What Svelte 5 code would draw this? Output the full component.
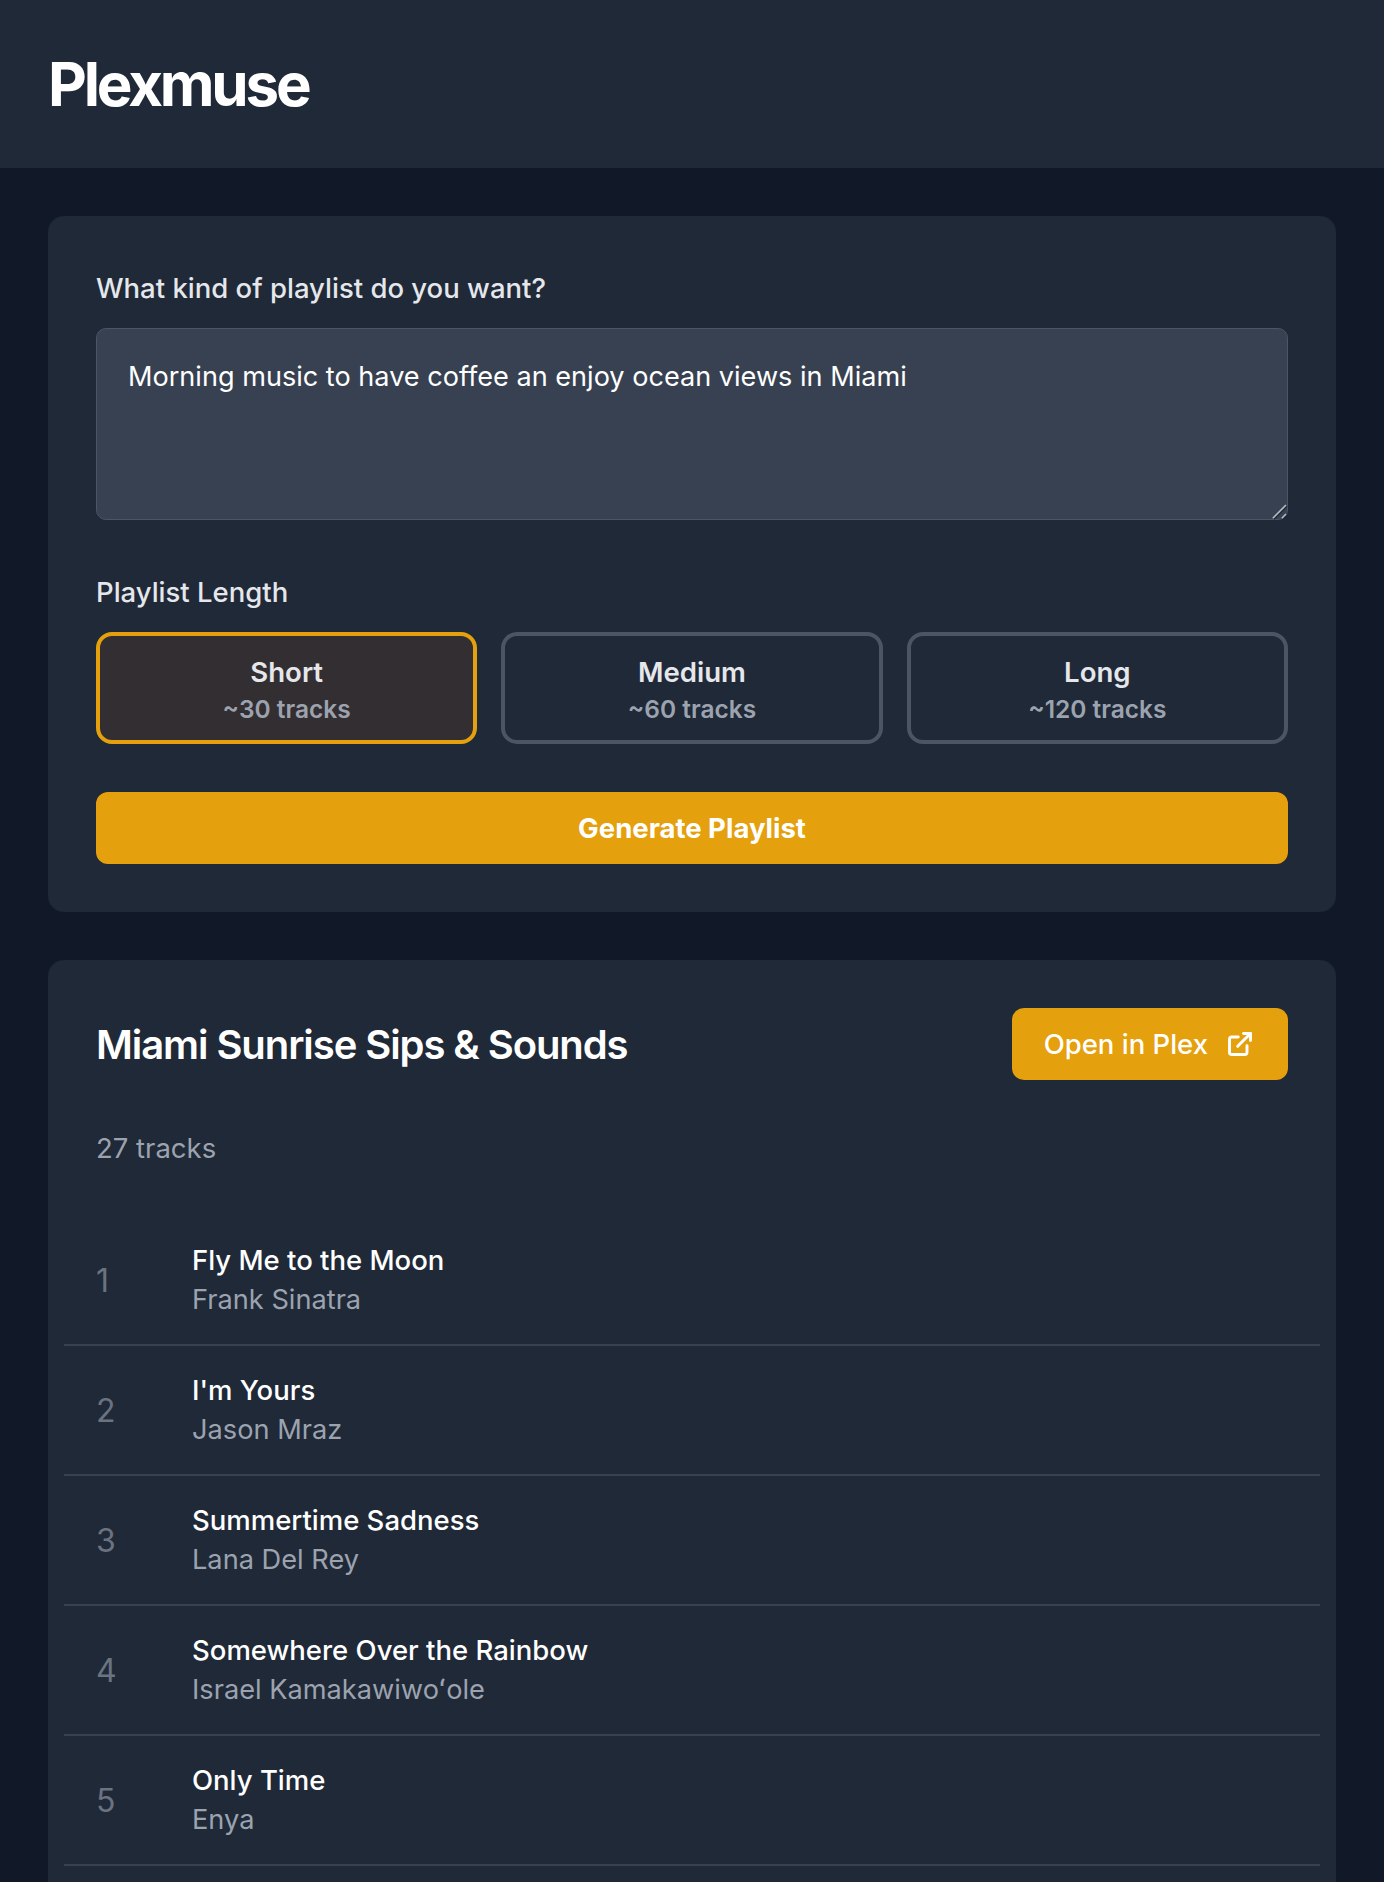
<script>
	let prompt = "Morning music to have coffee an enjoy ocean views in Miami";
	let selected = "short";

	const lengths = [
		{ id: "short", name: "Short", hint: "~30 tracks" },
		{ id: "medium", name: "Medium", hint: "~60 tracks" },
		{ id: "long", name: "Long", hint: "~120 tracks" }
	];

	const tracks = [
		{ title: "Fly Me to the Moon", artist: "Frank Sinatra" },
		{ title: "I'm Yours", artist: "Jason Mraz" },
		{ title: "Summertime Sadness", artist: "Lana Del Rey" },
		{ title: "Somewhere Over the Rainbow", artist: "Israel Kamakawiwoʻole" },
		{ title: "Only Time", artist: "Enya" }
	];
</script>

<header>
	<h1>Plexmuse</h1>
</header>

<main>
	<section class="card">
		<label for="prompt">What kind of playlist do you want?</label>
		<div class="prompt-box">
			<textarea id="prompt" bind:value={prompt}></textarea>
			<svg class="grip" viewBox="0 0 16 16" width="16" height="16" fill="none" stroke-width="1.6" aria-hidden="true">
				<path d="M1.8 15.2 15 2M10.8 15.2 15 11" stroke="#1f2937" />
				<path d="M.8 14.2 14 1M9.8 14.2 14 10" stroke="#b6bbc4" />
			</svg>
		</div>

		<div class="field-label">Playlist Length</div>
		<div class="lengths">
			{#each lengths as len}
				<button class="length" class:active={selected === len.id} on:click={() => (selected = len.id)}>
					<span class="name">{len.name}</span>
					<span class="hint">{len.hint}</span>
				</button>
			{/each}
		</div>

		<button class="generate">Generate Playlist</button>
	</section>

	<section class="card">
		<div class="result-head">
			<h2>Miami Sunrise Sips &amp; Sounds</h2>
			<button class="open">
				Open in Plex
				<svg viewBox="0 0 24 24" width="28" height="28" fill="none" stroke="currentColor" stroke-width="2.5" stroke-linecap="round" stroke-linejoin="round">
					<path d="M18 13.5V19a2 2 0 0 1-2 2H5a2 2 0 0 1-2-2V8a2 2 0 0 1 2-2h5.5" />
					<path d="M15 3h6v6" />
					<path d="M10 14 21 3" />
				</svg>
			</button>
		</div>
		<p class="count">27 tracks</p>

		<ul>
			{#each tracks as track, i}
				<li>
					<span class="num">{i + 1}</span>
					<div>
						<div class="title">{track.title}</div>
						<div class="artist">{track.artist}</div>
					</div>
				</li>
			{/each}
		</ul>
	</section>
</main>

<style>
	:global(body) {
		background: #111827;
		color: #fff;
		font-family: Inter, "Liberation Sans", sans-serif;
	}

	header {
		background: #1f2937;
		padding: 48px;
		height: 168px;
		box-sizing: border-box;
		display: flex;
		align-items: center;
	}

	h1 {
		margin: 0;
		font-size: 60px;
		font-weight: 700;
		letter-spacing: -0.053em;
		line-height: 72px;
	}

	main {
		padding: 48px;
		display: flex;
		flex-direction: column;
		gap: 48px;
	}

	.card {
		background: #1f2937;
		border-radius: 16px;
		padding: 48px;
	}

	label,
	.field-label {
		display: block;
		font-size: 27.5px;
		font-weight: 500;
		line-height: 48px;
		color: #e5e7eb;
		margin-bottom: 16px;
	}

	.prompt-box {
		position: relative;
		margin-bottom: 48px;
	}

	.grip {
		position: absolute;
		right: 0;
		bottom: 0;
		pointer-events: none;
	}

	textarea {
		display: block;
		width: 100%;
		height: 192px;
		box-sizing: border-box;
		background: #374151;
		border: 1.5px solid #4b5563;
		border-radius: 10px;
		padding: 28px 31px;
		color: #fff;
		font: inherit;
		font-size: 27.1px;
		line-height: 40px;
		outline: none;
		resize: none;
	}

	.lengths {
		display: grid;
		grid-template-columns: repeat(3, 1fr);
		gap: 24px;
		margin-bottom: 48px;
	}

	button {
		font-family: inherit;
		border: none;
		cursor: pointer;
	}

	.length {
		height: 112px;
		box-sizing: border-box;
		display: flex;
		flex-direction: column;
		align-items: center;
		justify-content: center;
		padding: 3px 0 0;
		background: transparent;
		border: 4px solid #4b5563;
		border-radius: 16px;
	}

	.length.active {
		border-color: #e5a00d;
		background: #332e31;
	}

	.name {
		font-size: 27.6px;
		font-weight: 600;
		line-height: 36px;
		color: #e5e7eb;
	}

	.hint {
		margin-top: 3px;
		font-size: 24.5px;
		font-weight: 600;
		line-height: 32px;
		color: #9ca3af;
	}

	.generate {
		display: block;
		width: 100%;
		height: 72px;
		background: #e5a00d;
		border-radius: 12px;
		color: #fff;
		font-size: 27.5px;
		font-weight: 700;
	}

	.result-head {
		display: flex;
		justify-content: space-between;
		align-items: center;
		margin-bottom: 48px;
	}

	h2 {
		margin: 0;
		font-size: 40px;
		font-weight: 600;
		letter-spacing: -0.027em;
	}

	.open {
		height: 72px;
		padding: 0 34px 0 32px;
		display: flex;
		align-items: center;
		gap: 18px;
		background: #e5a00d;
		border-radius: 12px;
		color: #fff;
		font-size: 27.5px;
		font-weight: 500;
	}

	.count {
		margin: 0 0 48px;
		font-size: 27.5px;
		line-height: 40px;
		color: #9ca3af;
	}

	ul {
		list-style: none;
		margin: 0 -32px;
		padding: 0;
	}

	li {
		height: 130px;
		box-sizing: border-box;
		display: flex;
		align-items: center;
		padding-left: 32px;
		border-bottom: 2px solid #374151;
	}

	.num {
		width: 96px;
		flex: none;
		font-size: 32px;
		line-height: 40px;
		padding-top: 2px;
		color: #6b7280;
	}

	.title {
		font-size: 27.5px;
		font-weight: 500;
		line-height: 40px;
	}

	.artist {
		font-size: 27.2px;
		line-height: 40px;
		color: #9ca3af;
	}
</style>
